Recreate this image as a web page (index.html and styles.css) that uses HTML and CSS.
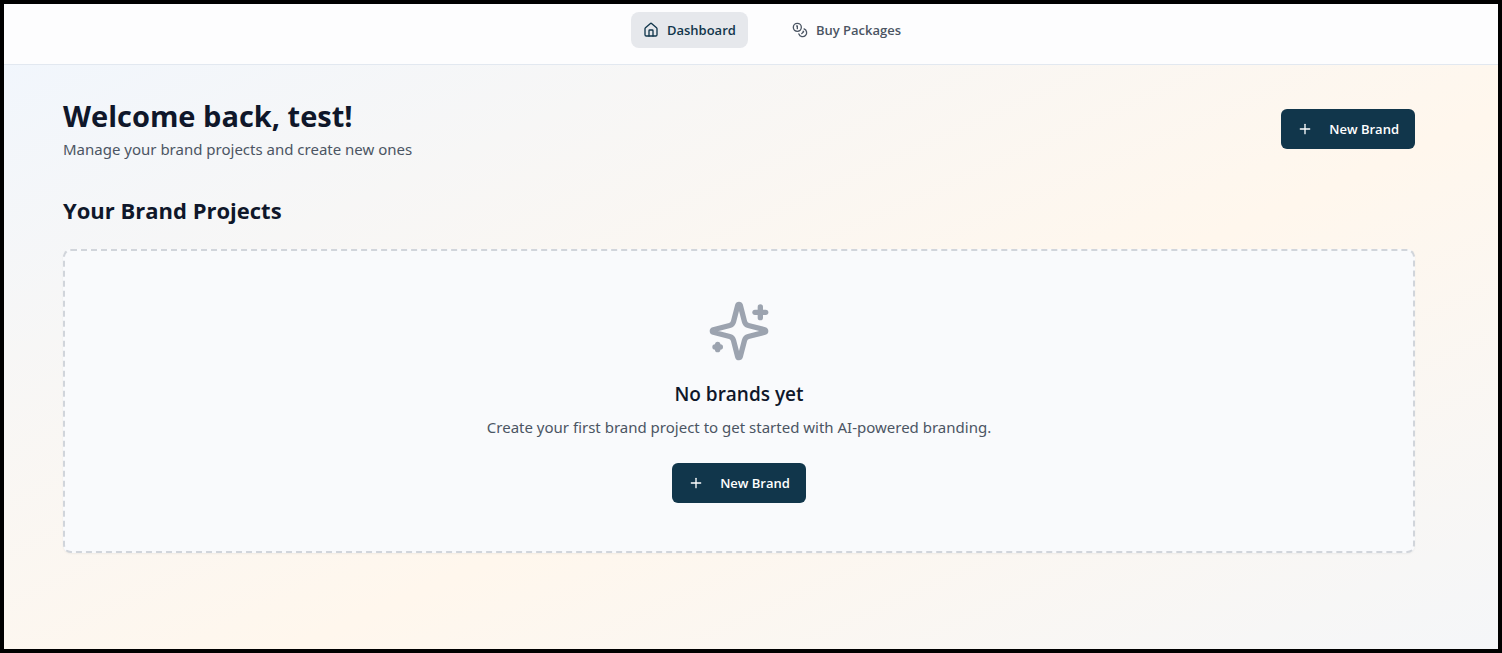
FILE: index.html
```html
<!DOCTYPE html>
<html lang="en">
  <head>
    <meta charset="UTF-8" />
    <meta name="viewport" content="width=device-width, initial-scale=1.0" />
    <title>Dashboard</title>
    <link rel="stylesheet" href="styles.css">
  </head>
  <body>
    <header class="navbar">
      <nav class="nav-links">
        <a href="#" class="nav-link active">
          <svg class="icon" viewBox="0 0 24 24">
            <path d="M15 21v-8a1 1 0 0 0-1-1h-4a1 1 0 0 0-1 1v8" />
            <path d="M3 10a2 2 0 0 1 .709-1.528l7-5.999a2 2 0 0 1 2.582 0l7 5.999A2 2 0 0 1 21 10v9a2 2 0 0 1-2 2H5a2 2 0 0 1-2-2z" />
          </svg>
          Dashboard
        </a>
        <a href="#" class="nav-link">
          <svg class="icon" viewBox="0 0 24 24">
            <circle cx="8" cy="8" r="6" />
            <path d="M18.09 10.37A6 6 0 1 1 10.34 18" />
            <path d="M7 6h1v4" />
            <path d="m16.71 13.88.7.71-2.82 2.82" />
          </svg>
          Buy Packages
        </a>
      </nav>
    </header>

    <main class="page">
      <div class="container">
        <div class="page-header">
          <div>
            <h1>Welcome back, test!</h1>
            <p class="subtitle">Manage your brand projects and create new ones</p>
          </div>
          <button type="button" class="btn">
            <svg class="icon" viewBox="0 0 24 24">
              <path d="M5 12h14" />
              <path d="M12 5v14" />
            </svg>
            New Brand
          </button>
        </div>

        <h2>Your Brand Projects</h2>

        <div class="empty-card">
          <svg class="empty-icon" viewBox="0 0 24 24">
            <path d="M9.937 15.5A2 2 0 0 0 8.5 14.063l-6.135-1.582a.5.5 0 0 1 0-.962L8.5 9.936A2 2 0 0 0 9.937 8.5l1.582-6.135a.5.5 0 0 1 .963 0L14.063 8.5A2 2 0 0 0 15.5 9.937l6.135 1.581a.5.5 0 0 1 0 .964L15.5 14.063a2 2 0 0 0-1.437 1.437l-1.582 6.135a.5.5 0 0 1-.963 0z" />
            <path d="M20 3v4" />
            <path d="M22 5h-4" />
            <path d="M4 17v2" />
            <path d="M5 18H3" />
          </svg>
          <h3>No brands yet</h3>
          <p class="empty-text">
            Create your first brand project to get started with AI-powered branding.
          </p>
          <button type="button" class="btn">
            <svg class="icon" viewBox="0 0 24 24">
              <path d="M5 12h14" />
              <path d="M12 5v14" />
            </svg>
            New Brand
          </button>
        </div>
      </div>
    </main>
  </body>
</html>
```
FILE: styles.css
```css
* {
  margin: 0;
  padding: 0;
  box-sizing: border-box;
}

body {
  display: flex;
  flex-direction: column;
  min-height: 100vh;
  border: 4px solid #000;
  font-family: "Open Sans", "Noto Sans", sans-serif;
  font-size: 15px;
  line-height: 24px;
  color: #0f172a;
}

svg {
  fill: none;
  stroke: currentColor;
  stroke-width: 2;
  stroke-linecap: round;
  stroke-linejoin: round;
}

.icon {
  width: 16px;
  height: 16px;
  flex-shrink: 0;
}

.navbar {
  padding: 8px 0 16px 42px;
  background: #fdfdfe;
  border-bottom: 1px solid #e2e8f0;
}

.nav-links {
  display: flex;
  justify-content: center;
  gap: 32px;
}

.nav-link {
  display: flex;
  align-items: center;
  gap: 8px;
  padding: 8px 12px;
  border-radius: 8px;
  font-size: 13px;
  font-weight: 600;
  line-height: 20px;
  color: #4b5563;
  text-decoration: none;
}

.nav-link.active {
  background: #e6e8ec;
  color: #11364b;
}

.page {
  flex: 1;
  padding: 32px 24px 32px 0;
  background: linear-gradient(156deg, #eff6ff -10%, #fff7ed 57%, #eff6ff 124%);
}

.container {
  max-width: 1400px;
  margin: 0 auto;
  padding: 0 24px;
}

.page-header {
  display: flex;
  align-items: center;
  justify-content: space-between;
  margin-bottom: 32px;
}

h1 {
  margin-bottom: 2px;
  font-size: 29px;
  font-weight: 700;
  line-height: 38px;
}

.subtitle,
.empty-text {
  font-family: "Noto Sans", "Open Sans", sans-serif;
  color: #4b5563;
}

h2 {
  margin-bottom: 22px;
  font-size: 22px;
  font-weight: 700;
  line-height: 34px;
}

.btn {
  display: inline-flex;
  align-items: center;
  gap: 16px;
  height: 40px;
  padding: 0 16px;
  border: none;
  border-radius: 6px;
  background: #11364b;
  color: #fff;
  font-family: inherit;
  font-size: 13px;
  font-weight: 600;
  cursor: pointer;
}

.btn:hover {
  background: #1b465e;
}

.empty-card {
  display: flex;
  flex-direction: column;
  align-items: center;
  padding: 48px;
  border: 2px dashed #d1d5db;
  border-radius: 8px;
  background: #f9fafc;
  box-shadow: 0 1px 2px rgba(0, 0, 0, 0.05);
  text-align: center;
}

.empty-icon {
  width: 64px;
  height: 64px;
  margin-bottom: 16px;
  color: #9ca3af;
}

h3 {
  margin-bottom: 6px;
  font-size: 19px;
  font-weight: 600;
  line-height: 30px;
}

.empty-text {
  margin-bottom: 24px;
}
```
